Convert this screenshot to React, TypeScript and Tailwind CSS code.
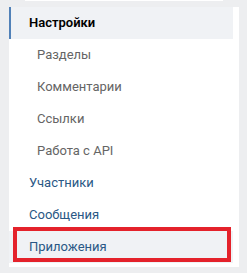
import React from 'react';

type Item = { label: string; level: 'active' | 'sub' | 'top'; hover?: boolean; marked?: boolean };

const items: Item[] = [
  { label: 'Настройки', level: 'active' },
  { label: 'Разделы', level: 'sub' },
  { label: 'Комментарии', level: 'sub' },
  { label: 'Ссылки', level: 'sub' },
  { label: 'Работа с API', level: 'sub' },
  { label: 'Участники', level: 'top' },
  { label: 'Сообщения', level: 'top' },
  { label: 'Приложения', level: 'top', hover: true, marked: true },
];

const MenuRow = ({ item }: { item: Item }) => {
  if (item.level === 'active') {
    return (
      <div className="h-8 leading-8 mr-[6px] border-l-2 border-[#5181b8] bg-[#f0f2f5] pl-[18px] text-[13px] font-semibold text-black">
        {item.label}
      </div>
    );
  }
  if (item.level === 'sub') {
    return <div className="h-8 leading-8 pl-[28px] text-[13px] text-[#656565]">{item.label}</div>;
  }
  return (
    <div className={`relative h-8 leading-8 mr-[6px] pl-[20px] text-[13px] text-[#2a5885] ${item.hover ? 'bg-[#f0f2f5]' : ''}`}>
      {item.label}
      {item.marked && (
        <div className="absolute left-[4px] top-[-4px] w-[218px] h-[35px] border-[4px] border-[#e4222b]" />
      )}
    </div>
  );
};

export default function App() {
  return (
    <div className="w-[247px] h-[273px] bg-[#edeef0] overflow-hidden" style={{ fontFamily: 'Roboto, "Open Sans", sans-serif' }}>
      <div className="ml-[25px] w-[198px] h-px bg-white" />
      <div className="mt-[6px] ml-[9px] w-[230px] bg-white pb-[4px]">
        {items.map((item) => (
          <MenuRow key={item.label} item={item} />
        ))}
      </div>
    </div>
  );
}
